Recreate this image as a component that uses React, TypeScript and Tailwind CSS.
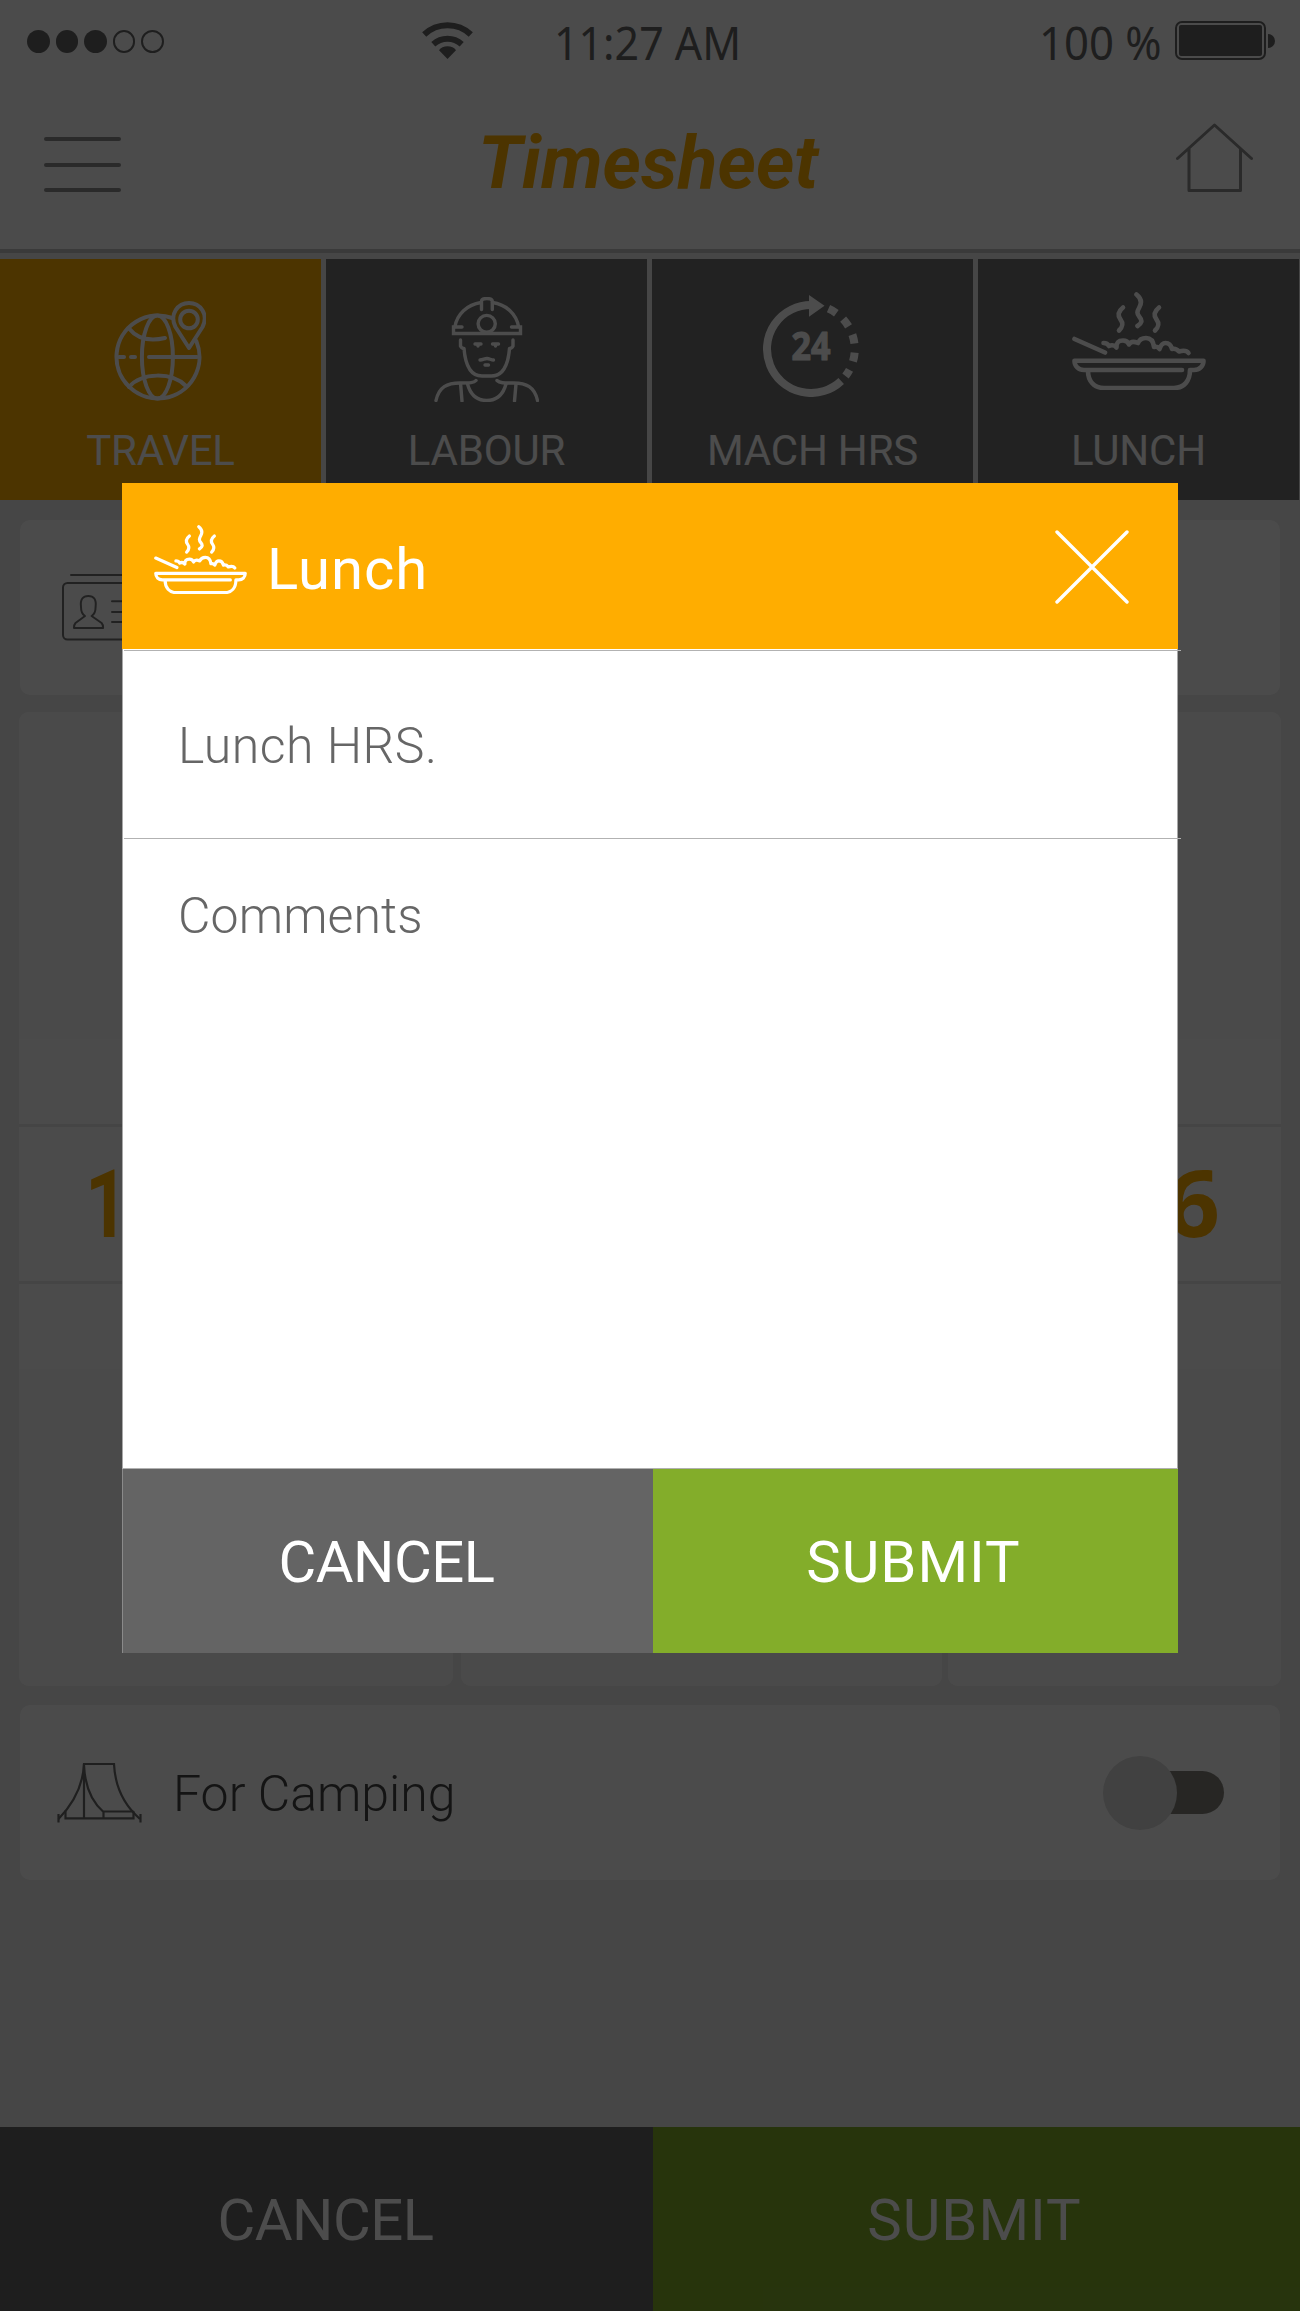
import React from "react";

type IconProps = { className?: string };

const line = {
  fill: "none",
  stroke: "currentColor",
  strokeLinecap: "round" as const,
  strokeLinejoin: "round" as const,
};

function LunchIcon({ className }: IconProps) {
  return (
    <svg viewBox="0 0 134 98" preserveAspectRatio="none" className={className} {...line} strokeWidth={4.6}>
      <path d="M2.5 47 33 60.500" />
      <path d="M64.500 2.500c5 4 5.500 8 3 12.500s-3 6.500 0 10 2.500 6-2 9" />
      <path d="M51 15.500c-5 4-5.500 8-2.500 12s2.500 7-1.500 11" />
      <path d="M87 15.500c-5 4-5.500 8-2.500 12s2.500 7-1.500 11" />
      <path d="M31.500 51q4 0 5.500 3 4.500-2 7.500 1.500-.5-7 6.500-7 4.500 0 6 4 2.500-4.500 9-1.500 2-5 8-5 7 0 8 9 3.500-1 5.500 2 2-6 6-6 5 0 6.500 6 4-1 7 2.500 7-2 9.500 1.500" />
      <path d="M110 78H12C6.500 78 2.500 74 2.500 68.700h129C131.500 74 127.500 78 122 78h-4c0 11-6 18-16 18H32c-10 0-16-7-16-17" />
    </svg>
  );
}

function TravelIcon({ className }: IconProps) {
  return (
    <svg viewBox="0 0 92 100" className={className} {...line} strokeWidth={4}>
      <path d="M58.300 17A41.500 41.500 0 1 0 82.300 40" />
      <ellipse cx="43.400" cy="56" rx="15.500" ry="41.500" />
      <path d="M35 56h48M5 56h5M17 56h4" />
      <path d="M15 27.500c8 10 21 13 36 9.500" />
      <path d="M15 86c13-15 43-15 57-1" />
      <circle cx="75" cy="18.500" r="8.800" />
      <path d="M75 47 61.500 26C55 13 64 2 75 2s20 11 13.500 24Z" />
    </svg>
  );
}

function LabourIcon({ className }: IconProps) {
  return (
    <svg viewBox="0 0 105 105" className={className} {...line} strokeWidth={3.400}>
      <path d="M21 29.500c2-12 12-22 26-24M84.500 29.500c-2-12-12-22-26-24" />
      <path d="M28 30h-8.500v6.500h67V30h-9" strokeLinejoin="miter" />
      <path d="M47.500 12.500V4.500c0-2 2-3 5.200-3s5.600 1 5.600 3v8" />
      <ellipse cx="52.700" cy="26.800" rx="8.600" ry="8.400" />
      <path d="M26.500 43v6c1 2 2 2.500 3.500 2.500C31.500 70 37 79 48 79h9.500c11 0 16.500-9 18-27.500 1.500 0 2.500-.5 3.500-2.500v-6" />
      <path d="M41 47h6M58.500 47h6M44 48v1M61.500 48v1" />
      <path d="M46 63c3 0 4.500-1.500 7-1.500s4 1.500 6.500 1.500M51 68h3.500" />
      <path d="M2 103.500C5 90 13 86 26 86c10 0 14 0 16-2.500M103.500 103.500C100.500 90 92.500 86 79.500 86c-10 0-14 0-16.500-2.500" />
      <path d="M33.500 87c3 11 10 16.500 19.200 16.500S69 98 72 87M26.600 87l1.400 17M82 87l-1.500 17" />
    </svg>
  );
}

function MachineIcon({ className }: IconProps) {
  return (
    <svg viewBox="0 0 96 102" className={className} fill="none" stroke="currentColor" strokeWidth={8}>
      <path d="M48 10A44 44 0 1 0 78.200 86" />
      <path d="M65.500 13.700A44 44 0 0 1 82.500 81" strokeDasharray="9 9.100" />
      <path d="M46 0 61.500 10.800 46 21.800Z" fill="currentColor" stroke="none" />
      <text
        x="28.500"
        y="65"
        textLength="39"
        lengthAdjust="spacingAndGlyphs"
        fill="currentColor"
        stroke="currentColor"
        strokeWidth={1.2}
        strokeLinejoin="round"
        className="font-['Open_Sans',sans-serif] text-[40px] font-bold"
      >
        24
      </text>
    </svg>
  );
}

function IdCardIcon({ className }: IconProps) {
  return (
    <svg viewBox="0 0 92 67" className={className} {...line} strokeWidth={2}>
      <path d="M9 1h74" />
      <rect x="1" y="9" width="90" height="56.500" rx="4.500" />
      <path d="M23 42c-3.500-2-4-5-4-9-1-8 2-11 7.300-11s8.300 3 7.300 11c0 4-.5 7-4 9l10 7c1 1 1.500 2.500 1.500 5H12c0-2.500.5-4 1.500-5Z" />
      <path d="M50 27.300h34M50 38h34M50 48h34" />
    </svg>
  );
}

function TentIcon({ className }: IconProps) {
  return (
    <svg viewBox="0 0 85 61" className={className} fill="none" stroke="currentColor" strokeWidth={2.200}>
      <path d="M1.500 57C17 41 26 24 27 2h30c1 22 10 41 26 55" />
      <path d="M1.500 52v8.500M83.500 52v8.500M27 2v54M27 3c1 23 8 37 19.500 47v6M46.500 49.500h30M8.500 48.500v7.800h68v-7" />
    </svg>
  );
}

function WifiIcon({ className }: IconProps) {
  return (
    <svg viewBox="0 0 51 37" className={className} fill="none" stroke="currentColor" strokeWidth={6}>
      <path d="M2.200 12.500a34 34 0 0 1 46.600 0M11.300 22.300a21 21 0 0 1 28.400 0" />
      <path d="M25.500 37 17 28.300C20 23 31 23 34 28.300Z" fill="currentColor" stroke="none" />
    </svg>
  );
}

function StatusBar() {
  return (
    <div className="flex h-20 items-center pt-[3px] text-[#656565] font-['Noto_Sans',sans-serif] text-[46px] leading-[60px]">
      <div className="ml-[27px] flex w-[395px] gap-[6px]">
        <i className="size-[22.500px] rounded-full bg-current" />
        <i className="size-[22.500px] rounded-full bg-current" />
        <i className="size-[22.500px] rounded-full bg-current" />
        <i className="size-[22.500px] rounded-full border-2 border-current" />
        <i className="size-[22.500px] rounded-full border-2 border-current" />
      </div>
      <WifiIcon className="mb-[3px] h-[37px] w-[51px]" />
      <div className="ml-[81px] w-[187px] whitespace-nowrap">
        <span className="inline-block origin-left scale-x-[0.933]">11:27 AM</span>
      </div>
      <div className="ml-[298px] w-[120px] whitespace-nowrap">
        <span className="inline-block origin-left scale-x-[0.95]">100 %</span>
      </div>
      <div className="ml-[16px] mb-[2px] flex items-center">
        <div className="h-[39px] w-[91px] rounded-[7px] border-2 border-current p-[2px]">
          <div className="h-full rounded-[2px] bg-current" />
        </div>
        <div className="ml-[2px] h-[14px] w-[7px] rounded-r-full bg-current" />
      </div>
    </div>
  );
}

function Header() {
  return (
    <header className="flex h-[173px] items-start border-b-4 border-[#c4c4c4] text-[#8c8c8c]">
      <div className="ml-11 mt-[57px] flex w-[77px] flex-col gap-[21.500px]">
        <i className="h-1 rounded bg-current" />
        <i className="h-1 rounded bg-current" />
        <i className="h-1 rounded bg-current" />
      </div>
      <h1 className="ml-[357px] mt-[43px] w-[698px] whitespace-nowrap font-['Roboto',sans-serif] text-[73px] font-bold italic leading-[80px] text-[#ffad00]">
        <span className="inline-block origin-left scale-x-[1.005]">Timesheet</span>
      </h1>
      <svg viewBox="0 0 77 70" className="mt-[43px] h-[70px] w-[77px]" {...line} strokeWidth={3}>
        <path d="M1.500 35.500 38.500 2l37 33.500M13 26v41.500h51.500V26" />
      </svg>
    </header>
  );
}

const tabs = [
  { label: "TRAVEL", active: true, icon: <TravelIcon className="mr-[2px] mt-[42px] h-[100px] w-[92px]" /> },
  { label: "LABOUR", active: false, icon: <LabourIcon className="mt-[38px] h-[105px] w-[105px]" /> },
  { label: "MACH HRS", active: false, icon: <MachineIcon className="mr-[3px] mt-[36px] h-[102px] w-[96px]" /> },
  { label: "LUNCH", active: false, icon: <LunchIcon className="mt-[33px] h-[98px] w-[134px]" /> },
];

function Tabs() {
  return (
    <nav className="mt-[6px] grid h-[241px] grid-cols-4 gap-[5px] pr-px">
      {tabs.map((tab) => (
        <div
          key={tab.label}
          className={`flex flex-col items-center text-white ${tab.active ? "bg-[#ffad00]" : "bg-[#727272]"}`}
        >
          <div className="h-[171px]">{tab.icon}</div>
          <span className="text-[42px] leading-[42px] tracking-[-0.200px]">{tab.label}</span>
        </div>
      ))}
    </nav>
  );
}

function TimeColumn({ className, children }: { className: string; children?: React.ReactNode }) {
  return (
    <div className={`flex flex-col overflow-hidden rounded-[10px] bg-[#fcfcfc] ${className}`}>
      <div className="h-[327px] bg-[#f8f8f8]" />
      <div className="h-[85px]" />
      <div className="flex h-[160px] items-center border-y-3 border-[#e8e8e8] text-[94px] font-bold text-[#ffad00]">
        {children}
      </div>
      <div className="h-[85px]" />
      <div className="grow bg-[#f8f8f8]" />
    </div>
  );
}

function LunchDialog() {
  return (
    <section className="flex h-[1170px] w-[1056px] flex-col bg-white">
      <div className="flex h-[166px] items-center bg-[#ffad00] text-white">
        <LunchIcon className="ml-8 mb-[13px] h-[69px] w-[93px]" />
        <h2 className="ml-[20px] pt-[6px] text-[58px] leading-[60px] tracking-[1px]">Lunch</h2>
        <svg viewBox="0 0 74 74" className="ml-auto mr-[49px] mt-[2px] size-[74px]" {...line} strokeWidth={3.400}>
          <path d="m2 2 70 70M72 2 2 72" />
        </svg>
      </div>
      <div className="flex h-[819px] flex-col border-x border-[#a8a8a8] text-[50px] font-light leading-[60px] text-[#666]">
        <div className="ml-px mt-px h-[189px] w-[1057px] border-y border-[#b2b2b2]">
          <p className="pl-[54px] pt-[65px] tracking-[0.500px]">Lunch HRS.</p>
        </div>
        <p className="pl-[55px] pt-[47px] tracking-[0.100px]">Comments</p>
      </div>
      <div className="flex h-[185px] border-t border-[#b0b0b0] text-[58px] text-white">
        <button className="w-[531px] border-l border-[#8a8a8a] bg-[#646464] pr-[3px] pt-[3px] tracking-[-0.500px]">
          CANCEL
        </button>
        <button className="grow bg-[#83ad2a] pr-[4px] pt-[3px] tracking-[1px]">SUBMIT</button>
      </div>
    </section>
  );
}

export default function App() {
  return (
    <div className="relative h-[2311px] w-[1300px] overflow-hidden bg-[#e9e9e9] font-['Roboto',sans-serif]">
      <div className="isolate flex h-full flex-col">
        <div className="bg-[#fcfcfc]">
          <StatusBar />
          <Header />
        </div>
        <Tabs />
        <main className="flex flex-col px-5 pt-5">
          <div className="h-[175px] rounded-[10px] bg-[#fcfcfc] pl-[42px] pt-[54px] text-[#707070]">
            <IdCardIcon className="h-[67px] w-[92px]" />
          </div>
          <div className="-mx-px mt-[17px] flex h-[974px]">
            <TimeColumn className="w-[434px]">
              <span className="ml-[66px] mt-[2px] origin-left scale-x-[0.8]">1</span>
            </TimeColumn>
            <TimeColumn className="ml-2 w-[481px]" />
            <TimeColumn className="ml-[6px] w-[333px]">
              <span className="mb-[6px] ml-auto pr-[61px] font-['Open_Sans',sans-serif]">6</span>
            </TimeColumn>
          </div>
          <div className="mt-[19px] flex h-[175px] items-center rounded-[10px] bg-[#fcfcfc]">
            <TentIcon className="ml-[37px] h-[61px] w-[85px] text-[#686868]" />
            <span className="ml-[31px] pt-[2px] text-[50px] font-light leading-[60px] text-[#444]">
              For Camping
            </span>
            <div className="ml-auto mr-[56px] flex items-center">
              <div className="z-10 size-[74px] rounded-full bg-[#d9d9d9]" />
              <div className="-ml-9 h-[43px] w-[83px] rounded-full bg-[#83807a]" />
            </div>
          </div>
        </main>
        <footer className="mt-auto flex h-[184px] text-[58px] text-white">
          <button className="w-[653px] bg-[#646464] pr-[2px] pt-[2px] tracking-[-0.500px]">CANCEL</button>
          <button className="grow bg-[#83ad2a] pr-[4px] pt-[2px] tracking-[1px]">SUBMIT</button>
        </footer>
      </div>
      <div className="absolute inset-0 bg-black/70 pl-[122px] pt-[483px]">
        <LunchDialog />
      </div>
    </div>
  );
}
